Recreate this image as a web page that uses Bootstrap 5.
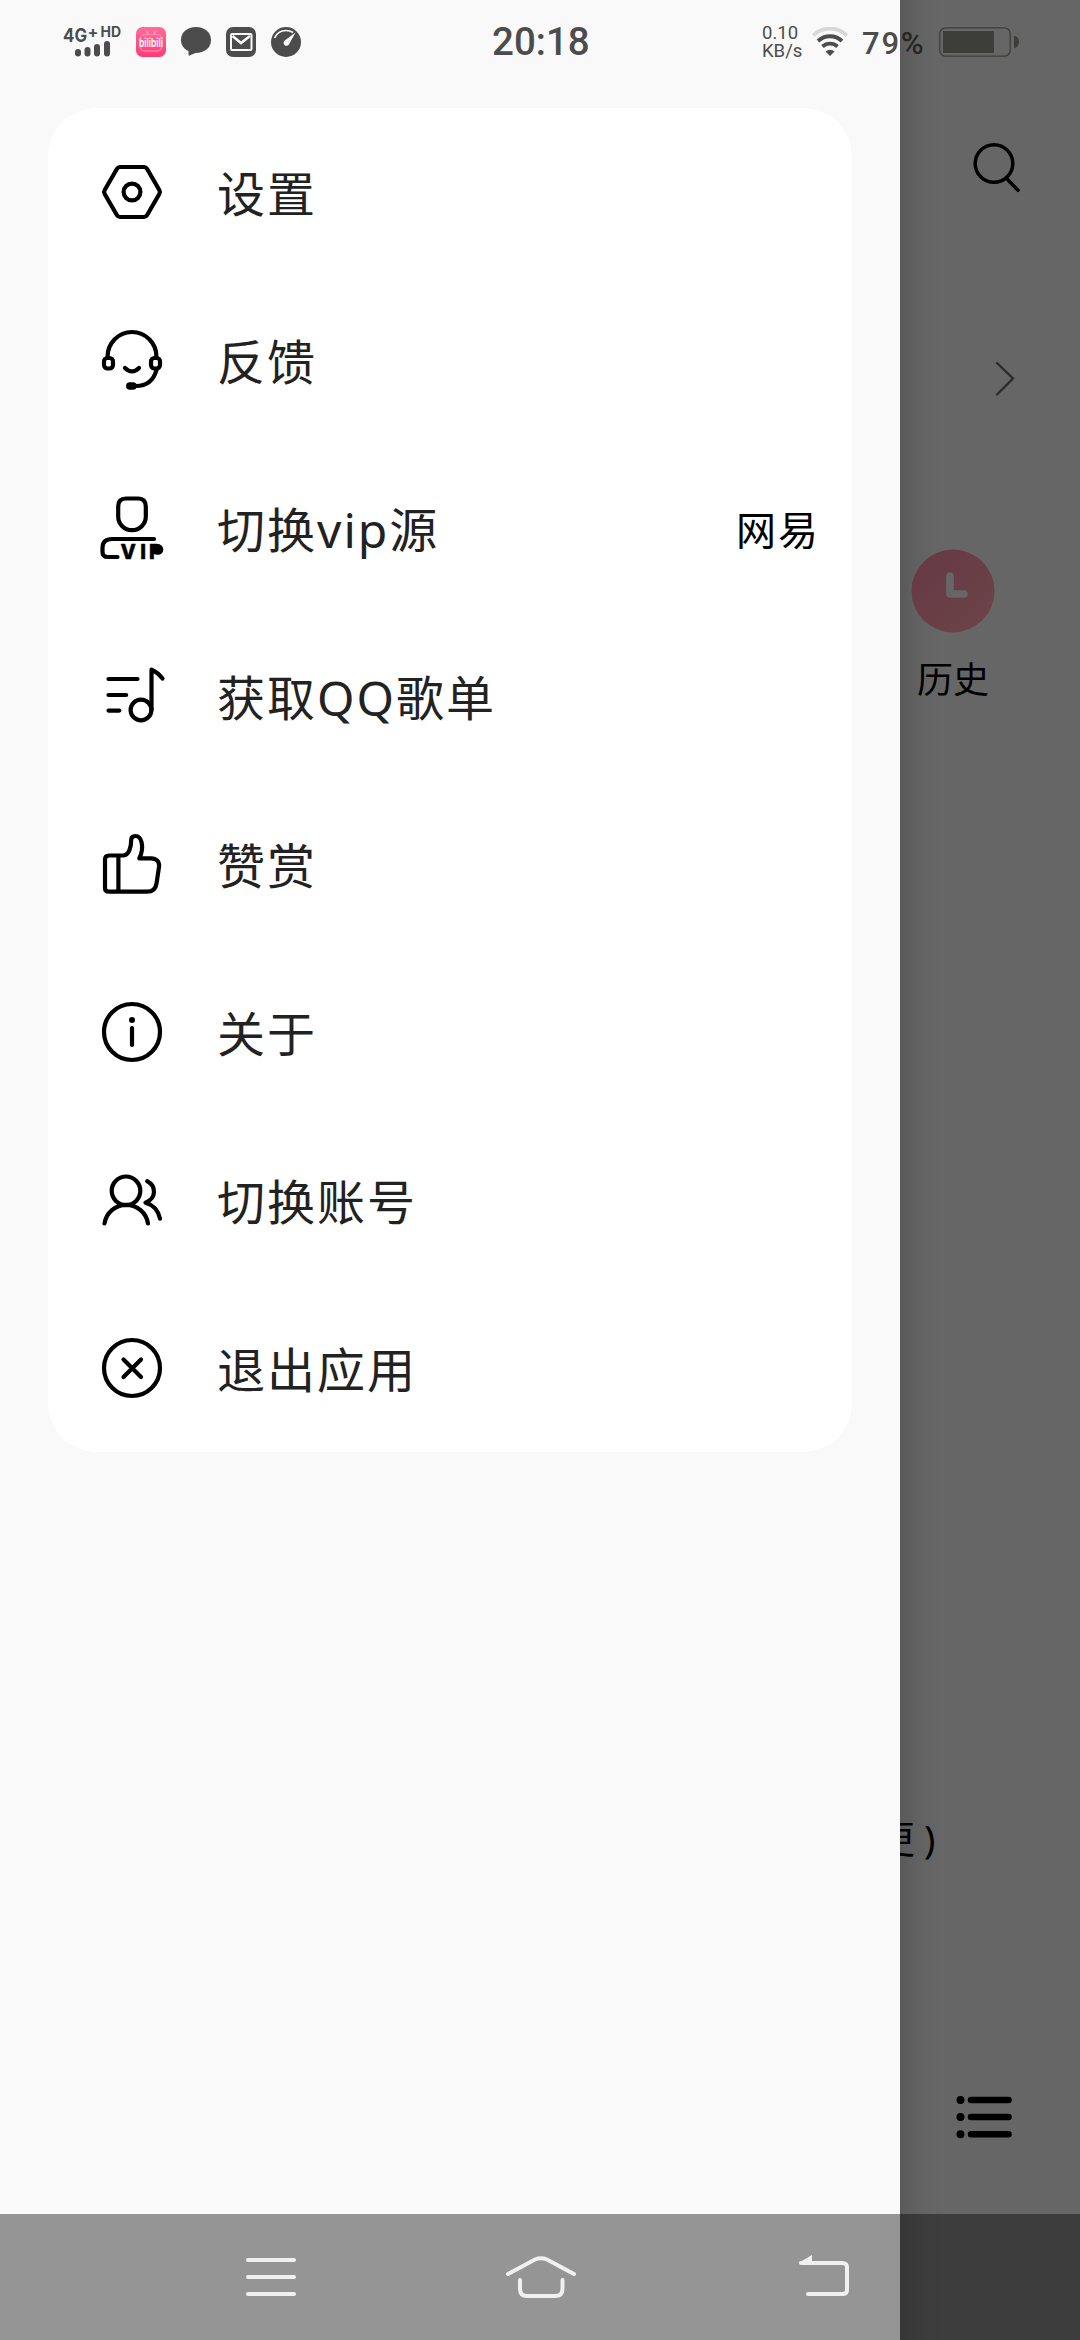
<!DOCTYPE html>
<html lang="zh-CN">
<head>
<meta charset="utf-8">
<meta name="viewport" content="width=device-width, initial-scale=1">
<title>菜单</title>
<link href="https://cdn.jsdelivr.net/npm/bootstrap@5.3.0/dist/css/bootstrap.min.css" rel="stylesheet">
<style>
body{font-family:"Noto Sans","Noto Sans CJK SC",sans-serif;background:#666;overflow:hidden}
.phone{width:1080px;height:2340px}
.drawer{width:900px;background:#f9f9f9;padding:108px 48px 0;z-index:2}
.menu-card{border-radius:48px;overflow:hidden}
.menu-card .list-group-item{height:168px;padding:0 32px 0 52px;gap:53px;color:#222;background:#fff;font-size:48px;letter-spacing:2px;line-height:1}
.menu-card svg{width:64px;height:64px;flex:none;overflow:visible;stroke:#000;stroke-width:4.2;fill:none;stroke-linecap:round;stroke-linejoin:round}
.item-label{padding-top:4px}
.item-value{font-size:40px;color:#000;padding-top:3px}
.dimmed{width:180px;overflow:hidden;background:linear-gradient(90deg,#595959 0,#5f5f5f 12px,#646464 27px,#666 42px);color:#000}
.search{margin:142px 0 0 72px}
.chevron{margin:167px 0 0 94px}
.history{margin:150px 0 0 11px;width:84px}
.history-label{font-size:36px;line-height:48px;margin-top:23px;white-space:nowrap}
.song{font-size:38px;line-height:50px;letter-spacing:9px;margin:1109px 0 0 -23px;white-space:nowrap}
.queue{margin:232px 0 0 56px}
.status{height:84px;color:#4c4c4c;font-family:Roboto,sans-serif;padding-left:63px}
.net{width:60px;height:34px;margin-right:13px;overflow:visible}
.glyphs{gap:15px}
.clock{font-size:38.5px;font-weight:500;line-height:1;margin-left:191px;width:97px;white-space:nowrap;padding-top:1px}
.speed{font-size:18.5px;line-height:18px;margin-left:173px;width:50px}
.speed div{line-height:18px}
.percent{font-size:31px;font-weight:500;line-height:1;letter-spacing:1.8px;margin-left:14px;width:77px;padding-top:3px}
.percent b{font-weight:500;color:#262626}
.sysnav{height:126px;background:rgba(0,0,0,.4)}
.sysnav svg{display:block}
.nav-recent{margin-left:246px}
.nav-home{margin-left:210px}
.nav-back{margin-left:222px}
</style>
</head>
<body>
<div class="phone position-relative d-flex overflow-hidden">
  <aside class="drawer">
    <ul class="menu-card list-group list-group-flush">
      <li class="list-group-item border-0 d-flex align-items-center"><svg viewBox="-32 -32 64 64"><path d="M-12-25H12Q14-25 15-23.300L27.300-2Q28.500 0 27.300 2L15 23.300Q14 25 12 25H-12Q-14 25-15 23.300L-27.300 2Q-28.500 0-27.300-2L-15-23.300Q-14-25-12-25Z"/><circle r="8.400"/></svg><span class="item-label">设置</span></li>
      <li class="list-group-item border-0 d-flex align-items-center"><svg viewBox="-32 -32 64 64"><path d="M-24.500-3A24.500 25 0 0 1 24.500-3M24.500 10Q20 26 4 26M-7 8Q0 15 7 8"/><rect x="-28" y="-2" width="9" height="10.500" rx="3.500"/><rect x="19" y="-2" width="9" height="10.500" rx="3.500"/><path d="M-2.200 26H1" stroke-width="7.500"/></svg><span class="item-label">反馈</span></li>
      <li class="list-group-item border-0 d-flex align-items-center"><svg viewBox="-32 -32 64 64"><path d="M-6-29.500H6Q13.800-29.500 13.800-21.500V-11.500A13.800 13.700 0 0 1-13.800-11.500V-21.500Q-13.800-29.500-6-29.500ZM22 11H-20Q-29.500 11-29.500 20V24Q-29.500 29-24 29H-14.500"/><text x="-11.500 8.200 17" y="31" fill="#000" stroke="#000" stroke-width=".5" style="font:800 20px Inter,sans-serif;letter-spacing:0">VIP</text><circle cx="26" cy="21.500" r="5.300" fill="#000" stroke="none"/></svg><span class="item-label flex-grow-1">切换vip源</span><span class="item-value">网易</span></li>
      <li class="list-group-item border-0 d-flex align-items-center"><svg viewBox="-32 -32 64 64"><path d="M-23.500-17H5.500M-23.500-1H-5.800M-23.500 14.600H-12.700M19.500 14V-26.300Q26-23.500 30.500-17.500"/><circle cx="9" cy="14" r="10.400"/></svg><span class="item-label">获取QQ歌单</span></li>
      <li class="list-group-item border-0 d-flex align-items-center"><svg viewBox="-32 -32 64 64"><path d="M-23-8.500H-9C-3-8.500-.8-17-.8-24Q-.8-28 3.500-28Q8-28 9.500-22C11-16 9.500-10 7.300-5.700H19Q28-5 27 3L24.600 19Q23.500 27.700 15 27.700H-23Q-27 27.700-27 24V-4.500Q-27-8.500-23-8.500ZM-13.600-8V27"/></svg><span class="item-label">赞赏</span></li>
      <li class="list-group-item border-0 d-flex align-items-center"><svg viewBox="-32 -32 64 64"><circle r="28"/><circle cy="-12" r="3" fill="#000" stroke="none"/><path d="M0-4V13"/></svg><span class="item-label">关于</span></li>
      <li class="list-group-item border-0 d-flex align-items-center"><svg viewBox="-32 -32 64 64"><circle cx="-6" cy="-9.200" r="14.300"/><path d="M-27.500 23.500A22 22 0 0 1 16 23.500M15.200-18.800C24-14 25-2 13.500 2.700Q25.500 6 28 18.700"/></svg><span class="item-label">切换账号</span></li>
      <li class="list-group-item border-0 d-flex align-items-center"><svg viewBox="-32 -32 64 64"><circle r="28"/><path d="M-8.500-8.500L9 9M9-8.500L-8.500 9"/></svg><span class="item-label">退出应用</span></li>
    </ul>
  </aside>

  <main class="dimmed d-flex flex-column align-items-start">
    <svg class="search flex-shrink-0" width="50" height="52" viewBox="0 0 50 52" fill="none" stroke="#000" stroke-width="3.500" stroke-linecap="round"><circle cx="22" cy="21.500" r="18.800"/><path d="M35 37L46 48.300"/></svg>
    <svg class="chevron flex-shrink-0" width="22" height="38" viewBox="0 0 22 38" fill="none" stroke="#2b2b2b" stroke-width="2.400" stroke-linecap="round"><path d="M3 2L19 17.500L3 33.500"/></svg>
    <div class="history flex-shrink-0 text-center">
      <svg class="d-block" width="84" height="84" viewBox="0 0 84 84"><defs><linearGradient id="rose" x1="0" y1="0" x2="1" y2="1"><stop stop-color="#663945"/><stop offset="1" stop-color="#6c4448"/></linearGradient></defs><circle cx="42" cy="42" r="41.500" fill="url(#rose)"/><path d="M39 27V45H53" fill="none" stroke="#666" stroke-width="7.600" stroke-linecap="round" stroke-linejoin="round"/></svg>
      <div class="history-label">历史</div>
    </div>
    <div class="song flex-shrink-0">更)</div>
    <svg class="queue flex-shrink-0" width="58" height="44" viewBox="0 0 58 44" stroke="#000" stroke-width="6.600" stroke-linecap="round"><path d="M15 5H52.500M15 22H52.500M15 39.300H52.500"/><g stroke="none"><circle cx="4.500" cy="5" r="4"/><circle cx="4.500" cy="22" r="4"/><circle cx="4.500" cy="39.300" r="4"/></g></svg>
  </main>

  <header class="status position-absolute top-0 start-0 w-100 z-3 d-flex align-items-center">
    <svg class="net flex-shrink-0" viewBox="0 0 60 34" fill="#4c4c4c"><g style="font-family:Inter,sans-serif;font-weight:700"><text x="0" y="16.500" font-size="19" textLength="24" lengthAdjust="spacingAndGlyphs">4G</text><text x="24.500" y="13" font-size="16">+</text><text x="37.500" y="12" font-size="14" textLength="20.500" lengthAdjust="spacingAndGlyphs">HD</text></g><path d="M15 27V28.500M24.500 25V28.500M34 22V28.500M44 19V28.500" stroke="#4c4c4c" stroke-width="6" stroke-linecap="round"/></svg>
    <div class="glyphs d-flex flex-shrink-0">
      <svg width="30" height="30" viewBox="0 0 30 30"><defs><linearGradient id="pink" x1="0" y1="0" x2="0" y2="1"><stop stop-color="#ff6c9b"/><stop offset="1" stop-color="#ff3b78"/></linearGradient></defs><rect width="30" height="30" rx="6.500" fill="url(#pink)"/><path d="M10 4L12.500 7M20 4L17.500 7" stroke="#ff9dbd" stroke-width="1.500"/><rect x="4.500" y="7.500" width="21" height="16.500" rx="4" fill="none" stroke="#ff82aa" stroke-width="1.500"/><text x="3" y="20" fill="#fff" font-family="Inter,sans-serif" font-size="12" font-weight="600" textLength="24" lengthAdjust="spacingAndGlyphs">bilibili</text></svg>
      <svg width="30" height="30" viewBox="0 0 30 30" fill="#4c4c4c"><path d="M15 0C24 0 30 5.500 30 13S24 26 14.500 26L8.500 28.500Q7.500 29 7.500 27.500V24C3 22 0 18 0 13C0 5.500 6 0 15 0Z"/></svg>
      <svg width="30" height="30" viewBox="0 0 30 30"><rect width="30" height="30" rx="7" fill="#4c4c4c"/><rect x="5" y="7" width="20.500" height="16" rx="1" fill="none" stroke="#f9f9f9" stroke-width="2"/><path d="M6.500 9L15 16L24 9" fill="none" stroke="#f9f9f9" stroke-width="2.600"/></svg>
      <svg width="30" height="30" viewBox="0 0 30 30"><circle cx="15" cy="15" r="15" fill="#4c4c4c"/><path d="M3.500 11Q7 3.500 15 3.500Q19 3.500 22 5.500" fill="none" stroke="#f9f9f9" stroke-width="1.700"/><path d="M24.500 5.500L18.500 16.500A3 3 0 1 1 13.700 13.500Z" fill="#f9f9f9"/></svg>
    </div>
    <div class="clock flex-shrink-0">20:18</div>
    <div class="speed flex-shrink-0"><div>0.10</div><div>KB/s</div></div>
    <svg class="flex-shrink-0" width="36" height="30" viewBox="0 0 36 30" fill="none" stroke="#4c4c4c" stroke-width="3.800"><path d="M1.200 8.500A24 24 0 0 1 34.800 8.500" stroke="#d8d8d8"/><path d="M6 14A17.500 17.500 0 0 1 30 14M10.500 19.500A11 11 0 0 1 25.500 19.500"/><path d="M18 29L13.500 24.500Q18 21 22.500 24.500Z" fill="#4c4c4c" stroke="none"/></svg>
    <div class="percent flex-shrink-0">79<b>%</b></div>
    <svg class="flex-shrink-0" width="82" height="30" viewBox="0 0 82 30"><rect x=".8" y=".8" width="70.400" height="28.400" rx="6" fill="none" stroke="#3d3e39" stroke-width="1.300"/><path d="M4 4H55V26H4ZM75 8.500Q80 10.500 80 15T75 21.500Z" fill="#3d3e39"/></svg>
  </header>

  <footer class="sysnav position-absolute bottom-0 start-0 w-100 z-3">
    <div class="d-flex h-100 align-items-center">
      <svg class="nav-recent" width="50" height="44" viewBox="0 0 50 44" stroke="#f0f0f0" stroke-width="4" stroke-linecap="round"><path d="M2 5H48M2 22H48M2 39H48"/></svg>
      <svg class="nav-home" width="70" height="44" viewBox="0 0 70 44" fill="none" stroke="#f0f0f0" stroke-width="4" stroke-linecap="round"><path d="M2 19L29 4.500Q35 2 41 4.500L68 19M14 25V34Q14 41 21 41H49Q56.500 41 56.500 34V25"/></svg>
      <svg class="nav-back" width="52" height="44" viewBox="0 0 52 44" fill="none" stroke="#f0f0f0" stroke-width="4" stroke-linecap="round"><path d="M3 8H44Q49 8 49 12V35Q49 39 44 39H10"/><path d="M.5 8L14 0V8Z" fill="#f0f0f0" stroke="none"/></svg>
    </div>
  </footer>
</div>
<script src="https://cdn.jsdelivr.net/npm/bootstrap@5.3.0/dist/js/bootstrap.bundle.min.js"></script>
</body>
</html>
